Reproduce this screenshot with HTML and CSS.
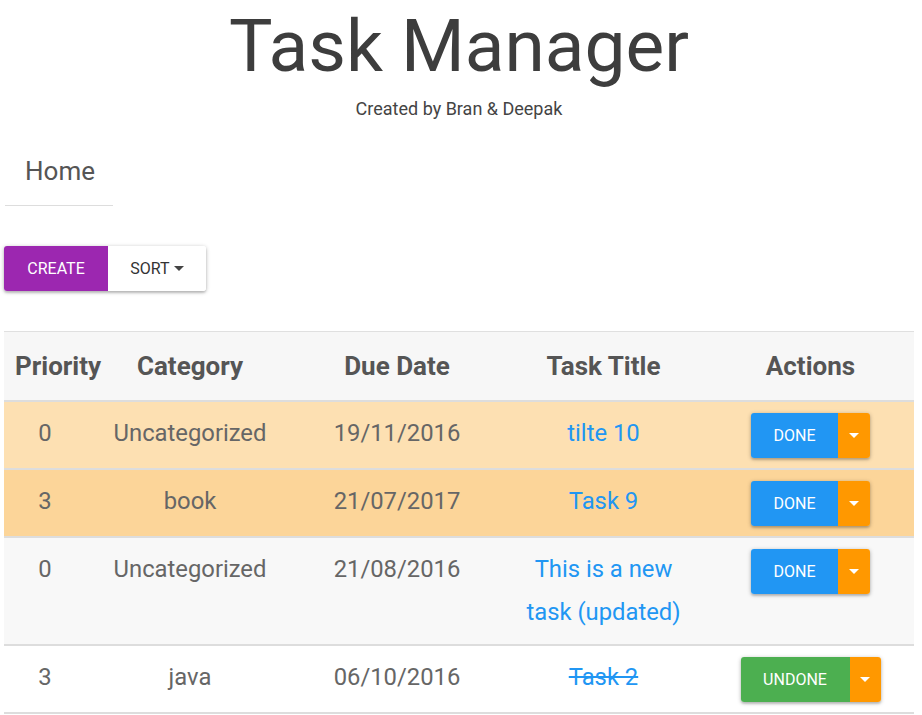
FILE: index.html
```html
<!DOCTYPE html>
<html>
<head>
<meta charset="utf-8">
<link rel="stylesheet" href="styles.css">
</head>
<body>
<div class="page">
  <header class="hero">
    <h1 class="title">Task Manager</h1>
    <p class="subtitle">Created by Bran &amp; Deepak</p>
  </header>
  <nav class="tabs">
    <a class="tab">Home</a>
  </nav>
  <div class="toolbar">
    <div class="btn-group raised">
      <button class="btn btn-create">CREATE</button>
      <button class="btn btn-sort">SORT <span class="caret dark"></span></button>
    </div>
  </div>
  <table class="tasks">
    <colgroup>
      <col class="c1"><col class="c2"><col class="c3"><col class="c4"><col class="c5">
    </colgroup>
    <thead>
      <tr><th>Priority</th><th>Category</th><th>Due Date</th><th>Task Title</th><th>Actions</th></tr>
    </thead>
    <tbody>
      <tr class="row-warn">
        <td>0</td><td>Uncategorized</td><td>19/11/2016</td><td><a class="link">tilte 10</a></td>
        <td class="actions"><div class="btn-group raised"><button class="btn btn-done">DONE</button><button class="btn btn-drop"><span class="caret"></span></button></div></td>
      </tr>
      <tr class="row-warn2">
        <td>3</td><td>book</td><td>21/07/2017</td><td><a class="link">Task 9</a></td>
        <td class="actions"><div class="btn-group raised"><button class="btn btn-done">DONE</button><button class="btn btn-drop"><span class="caret"></span></button></div></td>
      </tr>
      <tr class="row-grey">
        <td>0</td><td>Uncategorized</td><td>21/08/2016</td><td><a class="link">This is a new task (updated)</a></td>
        <td class="actions"><div class="btn-group raised"><button class="btn btn-done">DONE</button><button class="btn btn-drop"><span class="caret"></span></button></div></td>
      </tr>
      <tr class="row-white">
        <td>3</td><td>java</td><td>06/10/2016</td><td><a class="link done">Task 2</a></td>
        <td class="actions"><div class="btn-group raised"><button class="btn btn-undone">UNDONE</button><button class="btn btn-drop"><span class="caret"></span></button></div></td>
      </tr>
    </tbody>
  </table>
</div>
</body>
</html>
```
FILE: styles.css
```css
html, body {
  margin: 0;
  padding: 0;
  background: #fff;
}
body {
  font-family: Roboto, "Noto Sans", sans-serif;
  color: #444;
}
.page {
  padding: 0 8px 0 4px;
}
.hero {
  text-align: center;
}
.title {
  margin: 0;
  padding-top: 2px;
  font-size: 73px;
  font-weight: 400;
  line-height: 88px;
  color: #3d3d3d;
}
.subtitle {
  margin: 8px 0 0;
  font-size: 18px;
  line-height: 22px;
  color: #444;
}
.tabs {
  display: flex;
  margin-top: 17px;
}
.tab {
  display: block;
  width: 108px;
  box-sizing: border-box;
  padding: 19px 0 0 20px;
  height: 69px;
  margin-left: 1px;
  font-size: 26px;
  line-height: 30px;
  color: #555;
  border-bottom: 1px solid #ddd;
}
.toolbar {
  margin-top: 40px;
  display: flex;
}
.btn-group {
  display: inline-flex;
  border-radius: 3px;
  overflow: hidden;
}
.raised {
  box-shadow: 0 1px 4px rgba(0,0,0,0.28), 0 2px 2px rgba(0,0,0,0.12);
}
.btn {
  border: 0;
  margin: 0;
  font-family: Roboto, sans-serif;
  font-size: 16px;
  height: 45px;
  padding: 0;
  color: #fff;
  display: inline-flex;
  align-items: center;
  justify-content: center;
}
.btn-create {
  background: #9c27b0;
  width: 104px;
}
.btn-sort {
  background: #fff;
  color: #333;
  width: 98px;
  gap: 4px;
}
.caret {
  display: inline-block;
  width: 0;
  height: 0;
  border-left: 5px solid transparent;
  border-right: 5px solid transparent;
  border-top: 5px solid #fff;
}
.caret.dark {
  border-top-color: #444;
}
.toolbar + .tasks {
  margin-top: 40px;
}
.tasks {
  width: 910px;
  border-collapse: collapse;
  table-layout: fixed;
  border-top: 1px solid #e0e0e0;
}
.c1 { width: 82px; }
.c2 { width: 208px; }
.c3 { width: 206px; }
.c4 { width: 207px; }
.c5 { width: 207px; }
.tasks th {
  background: #f7f7f7;
  height: 68px;
  padding: 0 11px;
  font-size: 26px;
  font-weight: 700;
  color: #555;
  text-align: center;
  white-space: nowrap;
  border-bottom: 2px solid #ddd;
}
.tasks td {
  padding: 10px 15px 10px;
  font-size: 23.8px;
  line-height: 43px;
  color: #666;
  text-align: center;
  vertical-align: top;
  border-bottom: 2px solid #ddd;
}
.tasks td.actions {
  padding: 11px 0 10px;
  line-height: 0;
}
.row-warn td { background: #fde0b2; }
.row-warn2 td { background: #fcd599; }
.row-grey td { background: #f8f8f8; }
.row-white td { background: #fff; }
.link {
  color: #2196f3;
}
.link.done {
  text-decoration: line-through;
}
.btn-done {
  background: #2196f3;
  width: 87px;
}
.btn-undone {
  background: #4caf50;
  width: 109px;
}
.btn-drop {
  background: #ff9800;
  width: 32px;
}
.btn-undone + .btn-drop {
  width: 31px;
}
```
